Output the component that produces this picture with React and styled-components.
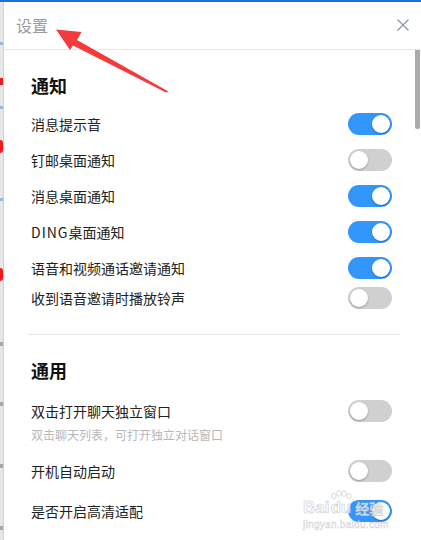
import React from "react";
import styled, { createGlobalStyle } from "styled-components";

const GlobalStyle = createGlobalStyle`
  html, body { margin: 0; padding: 0; background: #fff; }
  body { font-family: "Noto Sans CJK SC", "Noto Sans", sans-serif; }
  * { box-sizing: border-box; }
`;

const Page = styled.div`
  position: relative;
  width: 421px;
  height: 540px;
  overflow: hidden;
  display: flex;
  border-top: 2px solid #1f6fd6;
  background: #fff;
`;

const SideStrip = styled.div`
  position: relative;
  flex: none;
  width: 4px;
  background: #e7e7e7;
  border-right: 1px solid #d2d2d2;
`;

const StripMark = styled.span`
  position: absolute;
  left: 0;
  top: ${(p) => p.$top}px;
  width: 3px;
  height: ${(p) => p.$h}px;
  background: ${(p) => p.$color};
  border-radius: ${(p) => (p.$round ? "0 4px 4px 0" : "0")};
`;

const Dialog = styled.div`
  flex: 1;
  display: flex;
  flex-direction: column;
  background: #fff;
  min-width: 0;
`;

const Header = styled.div`
  flex: none;
  height: 48px;
  display: flex;
  align-items: center;
  justify-content: space-between;
  padding: 0 12px 1px 12px;
  border-bottom: 1px solid #e8e8e8;
`;

const HeaderTitle = styled.div`
  font-size: 16px;
  line-height: 20px;
  color: #9b9b9b;
`;

const CloseButton = styled.button`
  width: 12px;
  height: 12px;
  padding: 0;
  border: 0;
  background: none;
  display: flex;
  cursor: pointer;
`;

const Body = styled.div`
  position: relative;
  flex: 1;
  padding: 23px 29px 0 27px;
`;

const ScrollThumb = styled.div`
  position: absolute;
  top: 0;
  right: 1px;
  width: 5px;
  height: 79px;
  background: #ababab;
  border-radius: 0 0 2px 2px;
`;

const SectionTitle = styled.h2`
  margin: 0 0 ${(p) => p.$gap}px;
  font-size: 18px;
  line-height: 24px;
  font-weight: 700;
  color: #111;
`;

const Row = styled.div`
  display: flex;
  align-items: center;
  justify-content: space-between;
  height: ${(p) => p.$h}px;
`;

const Label = styled.span`
  font-size: 14px;
  line-height: 20px;
  color: #222;
`;

const Latin = styled.span`
  letter-spacing: 1px;
`;

const Hint = styled.div`
  margin: -4px 0 8px;
  font-size: 12px;
  line-height: 16px;
  color: #b8b8b8;
`;

const Divider = styled.div`
  height: 1px;
  background: #e8e8e8;
  margin: 24px -8px 23px -3px;
`;

const Track = styled.span`
  position: relative;
  flex: none;
  width: 44px;
  height: 22px;
  border-radius: 11px;
  background: ${(p) => (p.$on ? "#3296fa" : "#d0d0d0")};
`;

const Knob = styled.span`
  position: absolute;
  top: 2px;
  left: ${(p) => (p.$on ? "24px" : "2px")};
  width: 18px;
  height: 18px;
  border-radius: 50%;
  background: #fff;
  box-shadow: 0 1px 2px rgba(0, 0, 0, 0.28);
`;

const ArrowSvg = styled.svg`
  position: absolute;
  left: 50px;
  top: 23px;
`;

const Watermark = styled.div`
  position: absolute;
  left: 303px;
  top: 497px;
  display: flex;
  flex-direction: column;
  align-items: flex-start;
  pointer-events: none;
`;

const WmMain = styled.div`
  display: flex;
  align-items: flex-end;
  font-family: "Liberation Sans", Arial, sans-serif;
  font-weight: 700;
  font-size: 17px;
  line-height: 18px;
  color: rgba(255, 255, 255, 0.75);
  -webkit-text-stroke: 0.7px rgba(190, 190, 190, 0.75);
`;

const WmDu = styled.span`
  position: relative;
  margin-left: 1px;
`;

const Paw = styled.svg`
  position: absolute;
  left: 0;
  top: -9px;
`;

const WmCn = styled.span`
  font-family: "Noto Sans CJK SC", sans-serif;
  font-size: 14px;
  margin-left: 4px;
`;

const WmSub = styled.div`
  font-family: "Liberation Sans", Arial, sans-serif;
  font-size: 10px;
  line-height: 12px;
  margin-top: 2px;
  letter-spacing: 0.3px;
  color: rgba(255, 255, 255, 0.7);
  -webkit-text-stroke: 0.5px rgba(190, 190, 190, 0.7);
`;

function Toggle({ on }) {
  return (
    <Track $on={on} role="switch" aria-checked={on}>
      <Knob $on={on} />
    </Track>
  );
}

const notify = [
  [<><Latin>DING</Latin>桌面通知</>, "ding", true, 36],
];

const notifyRows = [
  ["消息提示音", true, 36],
  ["钉邮桌面通知", false, 36],
  ["消息桌面通知", true, 36],
  ["DING", true, 36],
  ["语音和视频通话邀请通知", true, 36],
  ["收到语音邀请时播放铃声", false, 24],
];

export default function App() {
  return (
    <>
      <GlobalStyle />
      <Page>
        <SideStrip>
          <StripMark $top={76} $h={7} $color="#e81e1e" />
          <StripMark $top={138} $h={13} $color="#f01c1c" $round />
          <StripMark $top={266} $h={13} $color="#f01c1c" $round />
          <StripMark $top={40} $h={3} $color="#9bb8d8" />
          <StripMark $top={104} $h={3} $color="#9bb8d8" />
          <StripMark $top={196} $h={3} $color="#9bb8d8" />
          <StripMark $top={340} $h={4} $color="#a8a8a8" />
          <StripMark $top={400} $h={4} $color="#a8a8a8" />
          <StripMark $top={462} $h={4} $color="#a8a8a8" />
          <StripMark $top={524} $h={4} $color="#a8a8a8" />
        </SideStrip>
        <Dialog>
          <Header>
            <HeaderTitle>设置</HeaderTitle>
            <CloseButton aria-label="关闭">
              <svg width="12" height="12" viewBox="0 0 12 12">
                <path d="M0.5 0.5 L11.5 11.5 M11.5 0.5 L0.5 11.5" stroke="#8a97a8" strokeWidth="1.2" fill="none" />
              </svg>
            </CloseButton>
          </Header>
          <Body>
            <ScrollThumb />
            <section>
              <SectionTitle $gap={9}>通知</SectionTitle>
              {notifyRows.map(([label, on, h]) => (
                <Row key={label} $h={h}>
                  <Label>{label === "DING" ? notify[0][0] : label}</Label>
                  <Toggle on={on} />
                </Row>
              ))}
            </section>
            <Divider />
            <section>
              <SectionTitle $gap={9}>通用</SectionTitle>
              <Row $h={40}>
                <Label>双击打开聊天独立窗口</Label>
                <Toggle on={false} />
              </Row>
              <Hint>双击聊天列表，可打开独立对话窗口</Hint>
              <Row $h={40}>
                <Label>开机自动启动</Label>
                <Toggle on={false} />
              </Row>
              <Row $h={40}>
                <Label>是否开启高清适配</Label>
                <Toggle on={true} />
              </Row>
            </section>
          </Body>
        </Dialog>
        <ArrowSvg width="125" height="72" viewBox="0 0 125 72">
          <polygon
            points="6,4.5 31.5,7 27,15 118.5,66.5 116,67.5 23,20.5 20,25"
            fill="#f23c3c"
          />
        </ArrowSvg>
        <Watermark>
          <WmMain>
            Bai
            <WmDu>
              <Paw width="22" height="10" viewBox="0 0 22 10">
                <g fill="rgba(255,255,255,0.75)" stroke="rgba(190,190,190,0.75)" strokeWidth="0.8">
                  <ellipse cx="4" cy="6" rx="2.2" ry="2.8" />
                  <ellipse cx="9" cy="3.5" rx="2.2" ry="2.8" />
                  <ellipse cx="14" cy="3.5" rx="2.2" ry="2.8" />
                  <ellipse cx="19" cy="6" rx="2" ry="2.6" />
                </g>
              </Paw>
              du
            </WmDu>
            <WmCn>经验</WmCn>
          </WmMain>
          <WmSub>jingyan.baidu.com</WmSub>
        </Watermark>
      </Page>
    </>
  );
}
